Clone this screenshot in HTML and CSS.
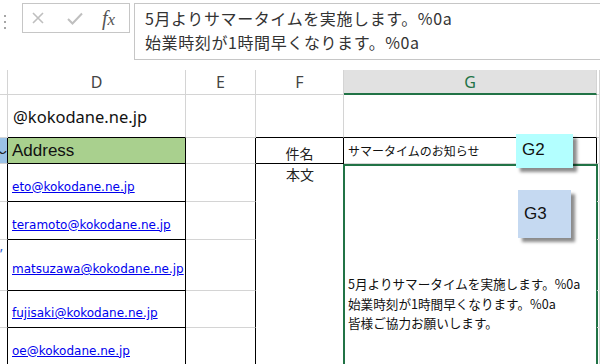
FILE: index.html
```html
<!DOCTYPE html>
<html lang="ja">
<head>
    <meta charset="UTF-8">
    <meta name="viewport" content="width=device-width, initial-scale=1.0">
    <title>Sheet</title>
    <link rel="stylesheet" href="styles.css">
</head>
<body>
    <div class="formula-bar">
        <div class="grip">
            <svg width="3" height="14" viewBox="0 0 3 14"><rect x="0" y="0" width="2" height="2" fill="#a6a6a6"/><rect x="0" y="6" width="2" height="2" fill="#a6a6a6"/><rect x="0" y="12" width="2" height="2" fill="#a6a6a6"/></svg>
        </div>
        <div class="fx-box">
            <svg class="icon-x" width="12" height="12" viewBox="0 0 12 12"><path d="M1 1 L11 11 M11 1 L1 11" stroke="#bfbfbf" stroke-width="1.6" fill="none"/></svg>
            <svg class="icon-check" width="16" height="13" viewBox="0 0 16 13"><path d="M1 7 L5.5 11.5 L15 1.5" stroke="#bfbfbf" stroke-width="2" fill="none"/></svg>
            <span class="fx">f<span class="fx-x">x</span></span>
        </div>
        <div class="formula-input">
            <div>5月よりサマータイムを実施します。%0a</div>
            <div>始業時刻が1時間早くなります。%0a</div>
        </div>
    </div>

    <div class="sheet">
        <!-- column headers -->
        <div class="cell head"></div>
        <div class="cell head">D</div>
        <div class="cell head">E</div>
        <div class="cell head">F</div>
        <div class="cell head head-active">G</div>
        <div class="cell head"></div>

        <!-- row 1 -->
        <div class="cell"></div>
        <div class="cell domain b-bottom">@kokodane.ne.jp</div>
        <div class="cell"></div>
        <div class="cell b-bottom"></div>
        <div class="cell b-bottom"></div>
        <div class="cell"></div>

        <!-- row 2 -->
        <div class="cell stub-blue b-right"><span>〜</span></div>
        <div class="cell address b-right b-bottom">Address</div>
        <div class="cell b-right"></div>
        <div class="cell subject-label b-right b-bottom">件名</div>
        <div class="cell subject b-right">サマータイムのお知らせ</div>
        <div class="cell"></div>

        <!-- rows 3-7, F and G merged -->
        <div class="cell body-label">本文</div>
        <div class="cell body-text">
            <div>5月よりサマータイムを実施します。%0a</div>
            <div>始業時刻が1時間早くなります。%0a</div>
            <div>皆様ご協力お願いします。</div>
        </div>

        <div class="cell b-right"></div>
        <div class="cell mail b-right b-bottom"><a href="#">eto@kokodane.ne.jp</a></div>
        <div class="cell b-right"></div>
        <div class="cell"></div>

        <div class="cell b-right"></div>
        <div class="cell mail b-right b-bottom"><a href="#">teramoto@kokodane.ne.jp</a></div>
        <div class="cell b-right"></div>
        <div class="cell"></div>

        <div class="cell stub-tick b-right"><span>’</span></div>
        <div class="cell mail b-right b-bottom"><a href="#">matsuzawa@kokodane.ne.jp</a></div>
        <div class="cell b-right"></div>
        <div class="cell"></div>

        <div class="cell b-right"></div>
        <div class="cell mail b-right b-bottom"><a href="#">fujisaki@kokodane.ne.jp</a></div>
        <div class="cell b-right"></div>
        <div class="cell"></div>

        <div class="cell b-right"></div>
        <div class="cell mail b-right b-bottom"><a href="#">oe@kokodane.ne.jp</a></div>
        <div class="cell b-right"></div>
        <div class="cell"></div>

        <!-- comments -->
        <div class="comment comment-g2">G2</div>
        <div class="comment comment-g3">G3</div>
    </div>
</body>
</html>
```

FILE: styles.css
```css
body {
    margin: 0;
    padding: 0;
    width: 600px;
    height: 364px;
    overflow: hidden;
    background-color: #fff;
    font-family: "Noto Sans", "Noto Sans CJK JP", sans-serif;
    color: #222;
}

/* formula bar */

.formula-bar {
    display: flex;
    align-items: flex-start;
    height: 70px;
    padding-top: 3px;
    box-sizing: border-box;
}

.grip {
    width: 22px;
    padding: 9px 0 0 4px;
    box-sizing: border-box;
}

.fx-box {
    display: flex;
    align-items: center;
    width: 108px;
    height: 30px;
    box-sizing: border-box;
    border: 1px solid #c6c6c6;
    padding-left: 9px;
}

.icon-check {
    margin-left: 23px;
}

.fx {
    margin-left: 19px;
    font-family: "Liberation Serif", serif;
    font-style: italic;
    font-size: 20px;
    color: #555;
    line-height: 1;
}

.fx-x {
    font-size: 17px;
}

.formula-input {
    flex: 1;
    margin-left: 4px;
    height: 57px;
    box-sizing: border-box;
    border: 1px solid #c6c6c6;
    border-right: none;
    padding: 2px 0 0 10px;
    font-family: "Noto Sans CJK JP", sans-serif;
    font-size: 16px;
    letter-spacing: 0.6px;
    line-height: 24px;
    color: #333;
    white-space: nowrap;
}

/* sheet grid */

.sheet {
    position: relative;
    display: grid;
    grid-template-columns: 8px 178px 70px 88px 253px 1fr;
    grid-template-rows: 25px 43px 26px 38px 38px 51px 37px 38px;
}

.cell {
    box-sizing: border-box;
    border-right: 1px solid #d4d4d4;
    border-bottom: 1px solid #d4d4d4;
    display: flex;
    align-items: center;
    overflow: hidden;
    white-space: nowrap;
}

.b-right {
    border-right-color: #000;
}

.b-bottom {
    border-bottom-color: #000;
}

.head {
    justify-content: center;
    font-size: 16px;
    color: #444;
}

.head-active {
    background-color: #e1e1e1;
    color: #217346;
    border-bottom: 2px solid #217346;
}

.domain {
    padding-left: 5px;
    font-size: 16.5px;
    color: #111;
}

.stub-blue {
    background-color: #9bc2e6;
    justify-content: flex-end;
    font-size: 14px;
}

.stub-tick {
    color: #2f5fd0;
    font-size: 14px;
    align-items: flex-start;
    padding-top: 4px;
}

.address {
    background-color: #a9d08e;
    padding-left: 4px;
    font-family: "Liberation Sans", sans-serif;
    font-size: 17px;
    color: #111;
}

.mail {
    padding: 8px 0 0 4px;
}

.mail a {
    color: #0000ee;
    font-family: "DejaVu Sans", sans-serif;
    font-size: 12px;
}

.subject-label {
    justify-content: center;
    font-family: "Noto Sans CJK JP", sans-serif;
    font-size: 14px;
    padding-top: 4px;
}

.subject {
    padding-left: 4px;
    font-family: "Noto Sans CJK JP", sans-serif;
    font-size: 12px;
    color: #111;
}

.body-label {
    grid-row: 4 / 9;
    grid-column: 4;
    border-right: none;
    border-bottom: none;
    justify-content: center;
    align-items: flex-start;
    font-family: "Noto Sans CJK JP", sans-serif;
    font-size: 14px;
    line-height: 20px;
}

.body-text {
    grid-row: 4 / 9;
    grid-column: 5;
    border: 2px solid #217346;
    border-bottom: none;
    margin-left: -1px;
    margin-right: -1px;
    display: block;
    padding: 108px 0 0 3px;
    font-family: "Noto Sans CJK JP", sans-serif;
    font-size: 12.6px;
    line-height: 19.5px;
    color: #111;
}

/* comment boxes */

.comment {
    position: absolute;
    box-sizing: border-box;
    font-family: "Liberation Sans", sans-serif;
    font-size: 17px;
    color: #111;
    display: flex;
    align-items: center;
    box-shadow: 4px 4px 3px rgba(0, 0, 0, 0.45);
}

.comment-g2 {
    left: 516px;
    top: 64px;
    width: 57px;
    height: 34px;
    padding: 0 0 2px 6px;
    background-color: #b3ffff;
}

.comment-g3 {
    left: 518px;
    top: 120px;
    width: 53px;
    height: 48px;
    padding-left: 6px;
    background-color: #c5d9f1;
}
```
